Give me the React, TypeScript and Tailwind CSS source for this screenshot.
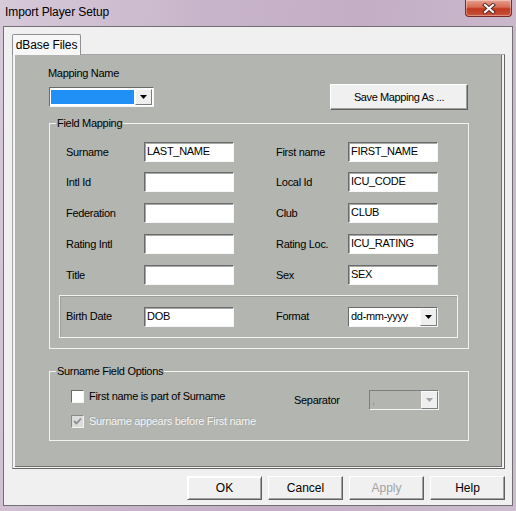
import React from 'react';

const ui = "font-['Liberation_Sans',Arial,sans-serif] text-[11px] tracking-[-0.3px] text-black";

const TextBox = ({ value }: { value?: string }) => (
  <div className="w-[90px] h-[20px] bg-white border border-t-[#6a6a6a] border-l-[#6a6a6a] border-r-[#f7f7f7] border-b-[#f7f7f7] shadow-[inset_1px_1px_0_#a8a8a8] pl-[2px] leading-[17px] overflow-hidden whitespace-nowrap">
    {value}
  </div>
);

const Arrow = ({ color = '#000' }: { color?: string }) => (
  <svg width="7" height="4" viewBox="0 0 7 4">
    <path d="M0 0h7L3.5 4z" fill={color} />
  </svg>
);

const DropButton = ({ disabled }: { disabled?: boolean }) => (
  <div className="w-[17px] h-full flex items-center justify-center bg-[#efefef] border border-t-[#fbfbfb] border-l-[#fbfbfb] border-r-[#7c7c7c] border-b-[#7c7c7c]">
    <Arrow color={disabled ? '#a3a3a3' : '#000'} />
  </div>
);

const Button = ({ label, disabled, className }: { label: string; disabled?: boolean; className?: string }) => (
  <div
    className={`flex items-center justify-center bg-[#f0f0f0] border border-t-white border-l-white border-r-[#5f5f5f] border-b-[#5f5f5f] shadow-[inset_-1px_-1px_0_#a0a0a0] ${disabled ? 'text-[#a2a2a2]' : ''} ${className}`}
  >
    {label}
  </div>
);

const Group = ({ title, className, children }: { title: string; className?: string; children: React.ReactNode }) => (
  <div className={`relative border border-[#f2f2f2] ${className}`}>
    <span className="absolute -top-[7px] left-[6px] px-[1px] leading-[13px] bg-[#b3b5b0]">{title}</span>
    {children}
  </div>
);

const rows = [
  { l1: 'Surname', v1: 'LAST_NAME', l2: 'First name', v2: 'FIRST_NAME', mt: 'mt-[18px]' },
  { l1: 'Intl Id', v1: '', l2: 'Local Id', v2: 'ICU_CODE', mt: 'mt-[10px]' },
  { l1: 'Federation', v1: '', l2: 'Club', v2: 'CLUB', mt: 'mt-[11px]' },
  { l1: 'Rating Intl', v1: '', l2: 'Rating Loc.', v2: 'ICU_RATING', mt: 'mt-[11px]' },
  { l1: 'Title', v1: '', l2: 'Sex', v2: 'SEX', mt: 'mt-[11px]' },
];

export default function App() {
  return (
    <div className={`w-[516px] h-[511px] flex flex-col px-[3px] bg-[linear-gradient(100deg,#d6c9d8_0%,#c8b4ca_35%,#c3aec5_60%,#cdbccf_100%)] ${ui}`}>
      {/* title bar */}
      <div className="h-[26px] flex items-start justify-between">
        <span className="pl-[2px] pt-[5px] text-[12px] tracking-[-0.1px] leading-[14px] text-black">Import Player Setup</span>
        <div className="w-[47px] h-[17px] mr-[1px] rounded-b-[4px] border border-t-0 border-[#7a2a22] bg-[linear-gradient(#e9a08f_0%,#d56b54_45%,#c0381f_55%,#c9533b_100%)] flex items-center justify-center shadow-[inset_0_0_0_1px_rgba(255,255,255,0.35)]">
          <svg width="14" height="11" viewBox="0 0 14 11">
            <path d="M3 2l8 7M11 2l-8 7" stroke="#5a2a24" strokeWidth="4" strokeLinecap="square" />
            <path d="M3 2l8 7M11 2l-8 7" stroke="#fff" strokeWidth="2" strokeLinecap="square" />
          </svg>
        </div>
      </div>

      {/* client area */}
      <div className="w-[510px] h-[480px] bg-[#f0f0f0] border border-[#707070] flex flex-col">
        {/* tab strip */}
        <div className="ml-[8px] mt-[7px] flex">
          <div className="w-[69px] h-[21px] -mb-[1px] z-10 bg-[#f7f7f7] border border-b-0 border-[#8f9196] rounded-t-[2px] flex items-center justify-center tracking-[-0.1px] text-[12px]">
            dBase Files
          </div>
        </div>
        <div className="ml-[8px] w-[493px] h-[415px] border border-l-[#a5a7a9] border-t-[#a5a7a9] border-r-[#666] border-b-[#666] bg-[#f4f4f4] pl-[2px]">
          {/* dialog page */}
          <div className="w-[487px] h-[412px] bg-[#b3b5b0] border-r border-b border-r-[#6f716d] border-b-[#6f716d] flex flex-col">
            <div className="flex items-start">
              <div className="ml-[33px] mt-[12px] flex flex-col">
                <span className="leading-[13px]">Mapping Name</span>
                <div className="ml-[1px] mt-[7px] w-[105px] h-[20px] bg-white border border-t-[#6a6a6a] border-l-[#6a6a6a] border-r-[#f7f7f7] border-b-[#f7f7f7] flex p-[1px]">
                  <div className="flex-1 bg-[#2190f6] my-[1px] mr-[1px]" />
                  <DropButton />
                </div>
              </div>
              <Button label="Save Mapping As ..." className="ml-auto mr-[33px] mt-[29px] w-[138px] h-[26px] tracking-[-0.4px]" />
            </div>

            <Group title="Field Mapping" className="ml-[34px] mt-[13px] w-[420px] h-[226px]">
              <div className="flex flex-col">
                {rows.map((r) => (
                  <div key={r.l1} className={`flex items-center h-[20px] ${r.mt}`}>
                    <span className="ml-[16px] w-[78px]">{r.l1}</span>
                    <TextBox value={r.v1} />
                    <span className="ml-[42px] w-[72px]">{r.l2}</span>
                    <TextBox value={r.v2} />
                  </div>
                ))}
                <div className="ml-[9px] mt-[10px] w-[399px] h-[43px] border border-[#f2f2f2] shadow-[inset_1px_1px_0_#9d9f9b] flex items-center">
                  <span className="ml-[6px] w-[78px]">Birth Date</span>
                  <TextBox value="DOB" />
                  <span className="ml-[42px] w-[72px]">Format</span>
                  <div className="w-[90px] h-[20px] bg-white border border-t-[#6a6a6a] border-l-[#6a6a6a] border-r-[#f7f7f7] border-b-[#f7f7f7] flex items-center">
                    <span className="flex-1 pl-[2px] leading-[17px]">dd-mm-yyyy</span>
                    <DropButton />
                  </div>
                </div>
              </div>
            </Group>

            <Group title="Surname Field Options" className="ml-[34px] mt-[22px] w-[420px] h-[70px]">
              <div className="flex items-start mt-[18px]">
                <div className="ml-[21px] flex items-center h-[13px]">
                  <div className="w-[13px] h-[13px] bg-white border border-t-[#6a6a6a] border-l-[#6a6a6a] border-r-[#f4f4f4] border-b-[#f4f4f4]" />
                  <span className="ml-[5px]">First name is part of Surname</span>
                </div>
                <div className="ml-auto flex items-center h-[20px]">
                  <span className="w-[75px]">Separator</span>
                  <div className="w-[70px] h-[20px] bg-[#b3b5b0] border border-t-[#7e7e7e] border-l-[#7e7e7e] border-r-[#f4f4f4] border-b-[#f4f4f4] flex items-center">
                    <span className="flex-1 pl-[2px] leading-[17px] text-[#8f8f8f]">,</span>
                    <DropButton disabled />
                  </div>
                  <div className="w-[29px]" />
                </div>
              </div>
              <div className="ml-[21px] mt-[5px] flex items-center h-[13px]">
                <div className="w-[13px] h-[13px] bg-[#dcdcdc] border border-t-[#8a8a8a] border-l-[#8a8a8a] border-r-[#f4f4f4] border-b-[#f4f4f4] flex items-center justify-center">
                  <svg width="9" height="9" viewBox="0 0 9 9">
                    <path d="M1 4l2.5 2.5L8 1.5" stroke="#8d8d8d" strokeWidth="1.8" fill="none" />
                  </svg>
                </div>
                <span className="ml-[5px] text-[#f3f3f3] [text-shadow:-1px_-1px_0_rgba(130,130,130,0.35)]">Surname appears before First name</span>
              </div>
            </Group>
          </div>
        </div>

        {/* bottom buttons */}
        <div className="mt-[7px] ml-[183px] flex gap-[6px] tracking-[0px] text-[12px]">
          <Button label="OK" className="w-[75px] h-[24px] border-[#3c3c3c] border-t-[#3c3c3c] border-l-[#3c3c3c] shadow-[inset_1px_1px_0_#fff,inset_-1px_-1px_0_#a0a0a0]" />
          <Button label="Cancel" className="w-[75px] h-[24px]" />
          <Button label="Apply" disabled className="w-[75px] h-[24px]" />
          <Button label="Help" className="w-[75px] h-[24px]" />
        </div>
      </div>
    </div>
  );
}
